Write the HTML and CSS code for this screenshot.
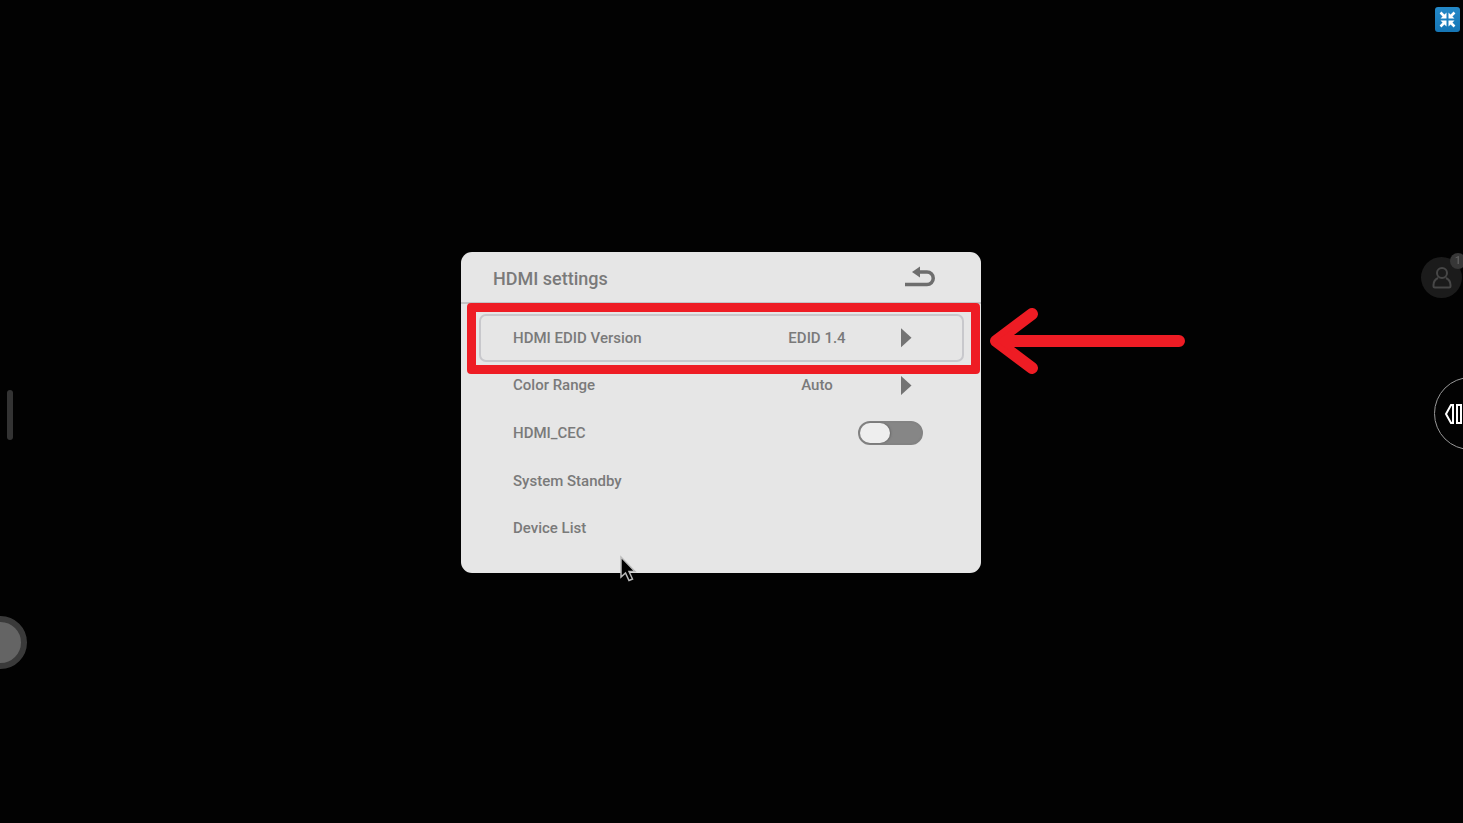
FILE: index.html
```html
<!DOCTYPE html>
<html lang="en">
<head>
  <meta charset="UTF-8">
  <meta name="viewport" content="width=device-width, initial-scale=1.0">
  <title>HDMI settings</title>
  <link rel="stylesheet" href="styles.css">
</head>
<body>
  <button class="shrink" aria-label="Exit full screen">
    <svg width="25" height="25" viewBox="0 0 25 25">
      <path d="M5.500 5.500l4 4M19.500 5.500l-4 4M5.500 19.500l4-4M19.500 19.500l-4-4" stroke="#fff" stroke-width="2.500"/>
      <path d="M11.500 5.500v6h-6zM13.500 5.500v6h6zM11.500 19.500v-6h-6zM13.500 19.500v-6h6z" fill="#fff"/>
    </svg>
  </button>

  <div class="drag-bar"></div>
  <div class="float-ball"></div>

  <button class="user" aria-label="Users">
    <svg width="20" height="22" viewBox="0 0 20 22" fill="none" stroke="#474747" stroke-width="2">
      <circle cx="10" cy="6" r="5"/>
      <path d="M6 11C3 12.500 1.500 15.500 1.500 18v1q0 1.500 1.500 1.500h14q1.500 0 1.500-1.500v-1c0-2.500-1.500-5.500-4.500-7"/>
    </svg>
    <span class="badge">1</span>
  </button>

  <button class="side-menu" aria-label="Open side menu">
    <svg width="24" height="22" viewBox="0 0 24 22" fill="none" stroke="#fff" stroke-width="2">
      <path d="M9 2v18H7L2 11l5-9zM13 2h4v18h-4z"/>
    </svg>
  </button>

  <main>
    <section class="panel">
      <header>
        <h1>HDMI settings</h1>
        <button class="back" aria-label="Back">
          <svg width="32" height="22" viewBox="0 0 32 22">
            <path d="M14 6h9a5.800 5.800 0 0 1 0 12.500H1" fill="none" stroke="#6e6e6e" stroke-width="3.500"/>
            <path d="M8 6l8-5.500v11z" fill="#6e6e6e"/>
          </svg>
        </button>
      </header>
      <ul class="settings">
        <li class="row selected">
          <span>HDMI EDID Version</span>
          <span class="value">EDID 1.4</span>
          <button class="next" aria-label="Next EDID version"></button>
        </li>
        <li class="row">
          <span>Color Range</span>
          <span class="value">Auto</span>
          <button class="next" aria-label="Next color range"></button>
        </li>
        <li class="row">
          <label for="cec">HDMI_CEC</label>
          <input type="checkbox" id="cec" class="toggle">
        </li>
        <li class="row"><button class="item">System Standby</button></li>
        <li class="row"><button class="item">Device List</button></li>
      </ul>

      <div class="mark"></div>
      <svg class="arrow" width="198" height="68" viewBox="0 0 198 68">
        <path d="M190 34H7M43 7L7 34l36 27" fill="none" stroke="#ee1c24" stroke-width="12" stroke-linecap="round" stroke-linejoin="round"/>
        <path d="M7 34l17-12v24z" fill="#ee1c24"/>
      </svg>
      <svg class="cursor" width="20" height="28" viewBox="0 0 20 28">
        <path d="M2 2v20l4.500-4 3.500 7.500 3.500-1.500-3.500-7.500h6z" fill="#000" stroke="#bbb" stroke-width="1.500"/>
      </svg>
    </section>
  </main>
</body>
</html>
```

FILE: styles.css
```css
* {
  box-sizing: border-box;
}
body {
  margin: 0;
  background-color: #020202;
  color: #7a7a7a;
  font-family: Roboto, Arial, sans-serif;
  font-size: 15px;
  font-weight: 500;
  overflow: hidden;
}
button {
  padding: 0;
  border: none;
  background: none;
  color: inherit;
  font: inherit;
  cursor: pointer;
}
svg {
  display: block;
}
main {
  display: flex;
  align-items: center;
  justify-content: center;
  min-height: 100vh;
  padding: 2px 21px 0 0;
}

/* settings panel */
.panel {
  position: relative;
  width: 520px;
  padding-bottom: 21px;
  background-color: #e6e6e6;
  border-radius: 11px;
}
.panel header {
  display: flex;
  align-items: center;
  justify-content: space-between;
  height: 52px;
  padding: 0 45px 0 32px;
  border-bottom: 2px solid #c4c4c6;
}
h1 {
  margin: 0;
  padding-top: 2px;
  font-size: 18px;
  font-weight: 500;
}
.settings {
  display: grid;
  grid-template-rows: repeat(5, 1fr);
  height: 238px;
  margin: 10px 17px 0 18px;
  padding: 0;
  list-style: none;
}
.row {
  display: grid;
  grid-template-columns: 1fr 120px 58px;
  align-items: center;
  padding: 0 29px 0 34px;
}
.selected {
  border-radius: 7px;
  box-shadow: inset 0 0 0 2px #c8c8cc;
}
.value {
  text-align: center;
}
.next {
  justify-self: center;
  width: 11px;
  height: 20px;
  background-color: #737373;
  clip-path: polygon(0 0, 100% 50%, 0 100%);
}
.item {
  text-align: left;
}
.toggle {
  appearance: none;
  grid-column: 2 / 4;
  justify-self: end;
  width: 65px;
  height: 24px;
  margin: 0 12px 0 0;
  border: 2px solid #838383;
  border-radius: 12px;
  background-color: #868686;
}
.toggle::before {
  content: "";
  display: block;
  width: 30px;
  height: 20px;
  border-radius: 10px;
  background-color: #eee;
  box-shadow: 1px 0 2px #666;
}
.toggle:checked::before {
  margin-left: 31px;
}

/* callout over the panel */
.mark {
  position: absolute;
  top: 51px;
  left: 6px;
  width: 513px;
  height: 71px;
  border: 9px solid #ee1c24;
  border-radius: 4px;
}
.arrow {
  position: absolute;
  top: 55px;
  left: 528px;
}
.cursor {
  position: absolute;
  top: 303px;
  left: 158px;
}

/* screen edges */
.shrink {
  position: fixed;
  top: 7px;
  right: 3px;
  border-radius: 3px;
  background: linear-gradient(#2489c8, #1676b5);
}
.drag-bar {
  position: fixed;
  top: 390px;
  left: 7px;
  width: 6px;
  height: 50px;
  border-radius: 3px;
  background-color: #333;
}
.float-ball {
  position: fixed;
  top: 616px;
  left: -26px;
  width: 53px;
  height: 53px;
  border: 6px solid #3a3a3a;
  border-radius: 50%;
  background-color: #646464;
}
.user {
  position: fixed;
  top: 257px;
  right: 1px;
  display: flex;
  align-items: center;
  justify-content: center;
  width: 41px;
  height: 41px;
  border-radius: 50%;
  background-color: #1b1b1b;
}
.badge {
  position: absolute;
  top: -4px;
  right: -4px;
  width: 16px;
  height: 16px;
  border-radius: 50%;
  background-color: #373737;
  color: #606060;
  font-size: 11px;
  line-height: 16px;
}
.side-menu {
  position: fixed;
  top: 377px;
  right: -44px;
  width: 73px;
  height: 73px;
  padding-left: 9px;
  border: 1px solid #999;
  border-radius: 50%;
}
```
